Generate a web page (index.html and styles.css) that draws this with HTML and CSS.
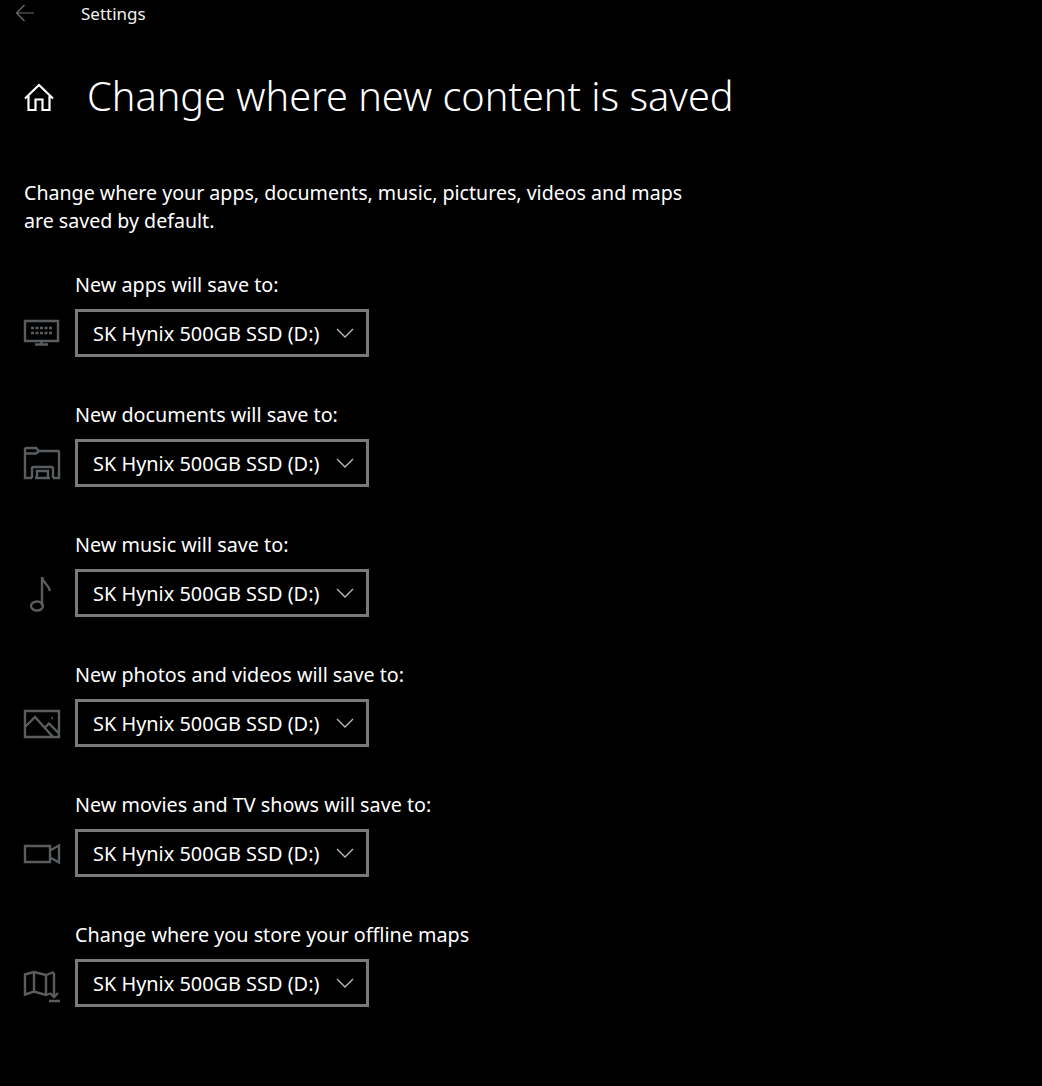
FILE: index.html
```html
<!DOCTYPE html>
<html lang="en">

<head>
    <meta charset="UTF-8">
    <meta name="viewport" content="width=device-width, initial-scale=1.0">
    <title>Settings</title>
    <link rel="stylesheet" href="styles.css">
</head>

<body>

    <header class="title-bar">
        <svg class="back-icon" width="20" height="18" viewBox="0 0 20 18">
            <path d="M19 9H1.500M9.500 1L1.500 9l8 8" />
        </svg>
        <span class="app-name">Settings</span>
    </header>

    <main class="page">
        <div class="page-head">
            <svg class="home-icon" width="30" height="30" viewBox="0 0 30 30">
                <path d="M1 17.500L15 4l14 13.500M4.500 14.500V29h7V18.500h7V29h7V14.500" />
            </svg>
            <h1>Change where new content is saved</h1>
        </div>

        <p class="intro">Change where your apps, documents, music, pictures, videos and maps are saved by default.</p>

        <section class="save-row">
            <label>New apps will save to:</label>
            <div class="save-control">
                <svg class="drive-icon" width="36" height="36" viewBox="0 0 36 36">
                    <path d="M1 6h33v20H1zM17.500 26v3M11 29.500h13" />
                    <path d="M7 13h3M11.500 13h3M16 13h3M20.500 13h3M25 13h3M7 18h3M11.500 18h3M16 18h3M20.500 18h3M25 18h3" />
                </svg>
                <div class="drive-select"><span>SK Hynix 500GB SSD (D:)</span>
                    <svg class="chevron" width="18" height="10" viewBox="0 0 18 10"><path d="M1 1l8 8 8-8" /></svg>
                </div>
            </div>
        </section>

        <section class="save-row">
            <label>New documents will save to:</label>
            <div class="save-control">
                <svg class="drive-icon" width="36" height="36" viewBox="0 0 36 36">
                    <path d="M8 33H1V4.500Q1 3 2.500 3H12l3 3h19q1 0 1 1v26h-6M1 8.500h11l3-2.500" />
                    <path d="M8 33V23.500Q8 22 9.500 22h18q1.500 0 1.500 1.500V33M13 33v-7h11v7zM11 33h15" />
                </svg>
                <div class="drive-select"><span>SK Hynix 500GB SSD (D:)</span>
                    <svg class="chevron" width="18" height="10" viewBox="0 0 18 10"><path d="M1 1l8 8 8-8" /></svg>
                </div>
            </div>
        </section>

        <section class="save-row">
            <label>New music will save to:</label>
            <div class="save-control">
                <svg class="drive-icon" width="36" height="36" viewBox="0 0 36 36">
                    <path d="M18 2v29M18 2q1 4 4 7 3 3 4 7" />
                    <ellipse cx="13" cy="31" rx="6" ry="4.500" />
                </svg>
                <div class="drive-select"><span>SK Hynix 500GB SSD (D:)</span>
                    <svg class="chevron" width="18" height="10" viewBox="0 0 18 10"><path d="M1 1l8 8 8-8" /></svg>
                </div>
            </div>
        </section>

        <section class="save-row">
            <label>New photos and videos will save to:</label>
            <div class="save-control">
                <svg class="drive-icon" width="36" height="36" viewBox="0 0 36 36">
                    <path d="M1 6h34v26H1zM1 22l10-10 18 20M21 22.500l4-4 10 10" />
                    <path d="M27.500 13h1.500" />
                </svg>
                <div class="drive-select"><span>SK Hynix 500GB SSD (D:)</span>
                    <svg class="chevron" width="18" height="10" viewBox="0 0 18 10"><path d="M1 1l8 8 8-8" /></svg>
                </div>
            </div>
        </section>

        <section class="save-row">
            <label>New movies and TV shows will save to:</label>
            <div class="save-control">
                <svg class="drive-icon" width="36" height="36" viewBox="0 0 36 36">
                    <path d="M1 11h25v16H1zM26 15.500l9-5v17l-9-5" />
                </svg>
                <div class="drive-select"><span>SK Hynix 500GB SSD (D:)</span>
                    <svg class="chevron" width="18" height="10" viewBox="0 0 18 10"><path d="M1 1l8 8 8-8" /></svg>
                </div>
            </div>
        </section>

        <section class="save-row">
            <label>Change where you store your offline maps</label>
            <div class="save-control">
                <svg class="drive-icon" width="36" height="36" viewBox="0 0 36 36">
                    <path d="M10 7L1 9.500v20l9-3 12 3.500 4-1.500M10 7l12 3 8-3M10 7v19.500M22 10v20" />
                    <path d="M30 8v24M26 28l4 4 4-4M25 36h11" />
                </svg>
                <div class="drive-select"><span>SK Hynix 500GB SSD (D:)</span>
                    <svg class="chevron" width="18" height="10" viewBox="0 0 18 10"><path d="M1 1l8 8 8-8" /></svg>
                </div>
            </div>
        </section>
    </main>

</body>

</html>
```

FILE: styles.css
```css
body {
    font-family: 'Noto Sans', 'Open Sans', sans-serif;
    margin: 0;
    padding: 0;
    background-color: #000;
    color: #fff;
    height: 1086px;
    overflow: hidden;
}

svg {
    fill: none;
    display: block;
    flex: none;
    overflow: visible;
}

.title-bar {
    display: flex;
    align-items: center;
    height: 26px;
    padding-left: 15px;
}

.back-icon {
    stroke: #6e6e6e;
    stroke-width: 1.2;
}

.app-name {
    font-size: 17px;
    margin-left: 46px;
    color: #f0f0f0;
}

.page {
    padding-left: 24px;
}

.page-head {
    display: flex;
    align-items: center;
    height: 80px;
    margin-top: 30px;
}

.home-icon {
    stroke: #fff;
    stroke-width: 2.2;
}

.page-head h1 {
    font-size: 39.7px;
    font-weight: 300;
    margin: 0 0 0 33px;
    padding-top: 2px;
    line-height: 1;
}

.intro {
    font-size: 19.6px;
    line-height: 28px;
    width: 670px;
    margin: 43px 0 0 0;
}

.save-row {
    margin-top: 36px;
    height: 100px;
}

.save-row + .save-row {
    margin-top: 30px;
}

.save-row label {
    display: block;
    font-size: 19.75px;
    line-height: 28px;
    margin-left: 51px;
    margin-bottom: 10px;
}

.save-control {
    display: flex;
    align-items: center;
}

.drive-icon {
    stroke: #5a5d60;
    stroke-width: 2.4;
    margin-right: 15px;
}

.drive-select {
    display: flex;
    align-items: center;
    justify-content: space-between;
    box-sizing: border-box;
    width: 294px;
    height: 48px;
    border: 3px solid #7a7a7a;
    padding: 0 12px 0 15px;
    font-size: 19.9px;
}

.chevron {
    stroke: #bdbdbd;
    stroke-width: 1.3;
}
```
